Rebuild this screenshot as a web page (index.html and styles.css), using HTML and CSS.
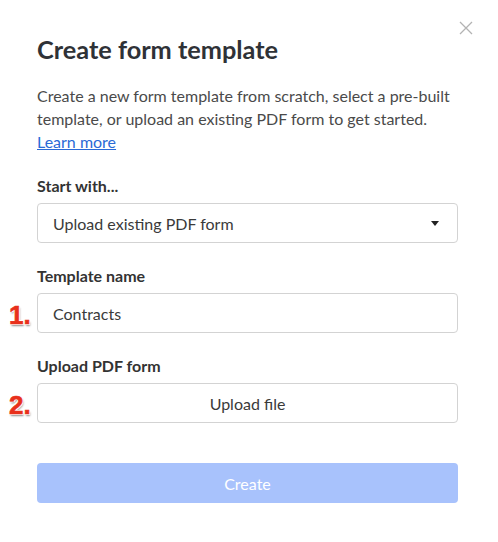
FILE: index.html
```html
<!DOCTYPE html>
<html lang="en">
<head>
<meta charset="UTF-8">
<meta name="viewport" content="width=device-width, initial-scale=1.0">
<title>Create form template</title>
<link rel="stylesheet" href="styles.css">
</head>
<body>
<div class="modal">
 <button class="cerrar" aria-label="Close">
 <svg width="14" height="14" viewBox="0 0 14 14"><path d="M1 1 L13 13 M13 1 L1 13" stroke="#b3b3b3" stroke-width="1.3" fill="none"/></svg>
 </button>
 <h1 class="titulo">Create form template</h1>
 <p class="descripcion">Create a new form template from scratch, select a pre-built template, or upload an existing PDF form to get started. <a href="#">Learn more</a></p>

 <!-- Start with -->
 <div class="campo">
 <label class="etiqueta">Start with...</label>
 <div class="caja select">
 <span>Upload existing PDF form</span>
 <span class="flecha"></span>
 </div>
 </div>

 <!-- Template name -->
 <div class="campo">
 <label class="etiqueta">Template name</label>
 <div class="caja">
 <span class="paso">1.</span>
 <span>Contracts</span>
 </div>
 </div>

 <!-- Upload PDF -->
 <div class="campo">
 <label class="etiqueta">Upload PDF form</label>
 <div class="caja boton-subir">
 <span class="paso">2.</span>
 <span>Upload file</span>
 </div>
 </div>

 <button class="crear">Create</button>
</div>
</body>
</html>
```

FILE: styles.css
```css
body {
 margin: 0;
 background-color: #fff;
 font-family: Lato, "Open Sans", sans-serif;
 color: #4a4a4a;
}
.modal {
 position: relative;
 padding: 34px 40px 40px 37px;
}
.cerrar {
 position: absolute;
 top: 21px;
 right: 25px;
 background: none;
 border: none;
 padding: 0;
 cursor: pointer;
}
.titulo {
 margin: 0;
 font-size: 25.3px;
 line-height: 30px;
 font-weight: 700;
 color: #2f3237;
}
.descripcion {
 margin: 20px 0 0;
 font-size: 16px;
 line-height: 23px;
 color: #4a4a4a;
}
.descripcion a {
 color: #2a6ad6;
}
.campo {
 margin-top: 23px;
}
.etiqueta {
 display: block;
 font-size: 16px;
 font-weight: 700;
 line-height: 20px;
 color: #333;
 margin-bottom: 7px;
}
.caja {
 position: relative;
 display: flex;
 align-items: center;
 height: 38px;
 padding: 0 15px;
 border: 1px solid #d3d3d3;
 border-radius: 4px;
 font-size: 16px;
 color: #3a3a3a;
}
.select {
 justify-content: space-between;
 padding-right: 18px;
}
.flecha {
 width: 0;
 height: 0;
 border-left: 4px solid transparent;
 border-right: 4px solid transparent;
 border-top: 5px solid #222;
}
.boton-subir {
 justify-content: center;
}
.paso {
 position: absolute;
 left: -29px;
 top: 6px;
 font-family: "Liberation Sans", Arial, sans-serif;
 font-size: 26px;
 font-weight: 700;
 color: #e8301c;
 -webkit-text-stroke: 0.6px #e8301c;
 text-shadow: -1px -1px 0 #fff, 1px -1px 0 #fff, -1px 1px 0 #fff, 1px 1px 0 #fff, 1px 2px 2px rgba(0,0,0,0.45);
}
.crear {
 display: block;
 width: 100%;
 height: 40px;
 margin-top: 40px;
 border: none;
 border-radius: 4px;
 background-color: #a8c2fc;
 color: #fff;
 font-family: inherit;
 font-size: 16px;
}
```
